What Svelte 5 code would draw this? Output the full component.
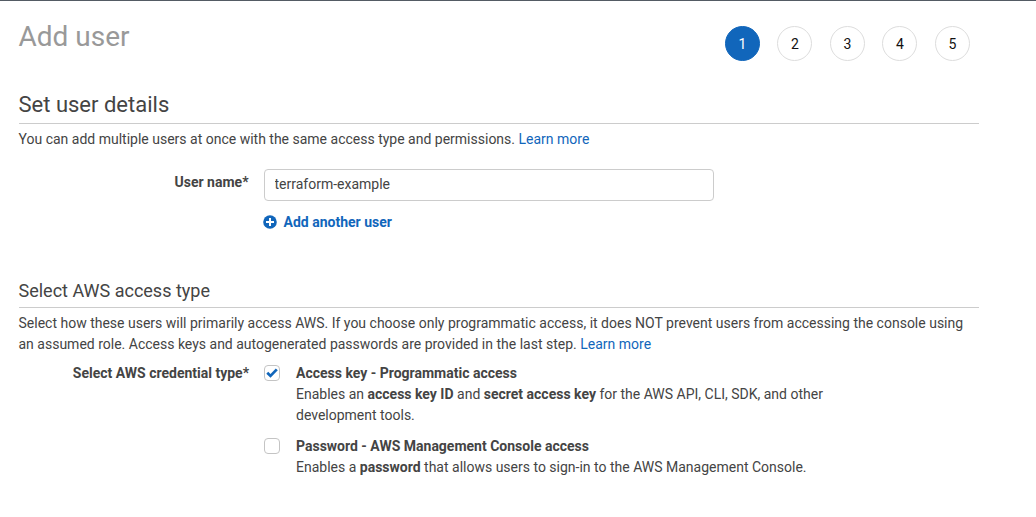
<script>
  const steps = [1, 2, 3, 4, 5];
  let userName = $state('terraform-example');
  let accessKey = $state(true);
  let password = $state(false);
</script>

{#snippet check()}
  <svg width="14" height="14" viewBox="0 0 14 14"><path d="M1.3 7.7L3.2 5.8l2.3 2.2L10.8 2.6l2 1.7-7.3 7.4z" fill="#1166bb" /></svg>
{/snippet}

<main>
  <header>
    <h1>Add user</h1>
    <ol class="steps">
      {#each steps as step}
        <li class:active={step === 1}>{step}</li>
      {/each}
    </ol>
  </header>

  <section class="details">
    <h2>Set user details</h2>
    <p>You can add multiple users at once with the same access type and permissions. <a href="#learn">Learn more</a></p>
    <div class="field">
      <label for="name">User name*</label>
      <input id="name" type="text" bind:value={userName} />
    </div>
    <button class="add" type="button">
      <svg width="14" height="14" viewBox="0 0 14 14"><circle cx="7" cy="7" r="6.8" fill="#1166bb" /><path d="M7 3v8M3 7h8" stroke="#fff" stroke-width="2" /></svg>
      <span>Add another user</span>
    </button>
  </section>

  <section class="access">
    <h3>Select AWS access type</h3>
    <p>Select how these users will primarily access AWS. If you choose only programmatic access, it does NOT prevent users from accessing the console using<br />an assumed role. Access keys and autogenerated passwords are provided in the last step. <a href="#learn">Learn more</a></p>
    <div class="credentials">
      <div class="label">Select AWS credential type*</div>
      <div class="options">
        <label class="option">
          <input type="checkbox" bind:checked={accessKey} />
          <span class="box">{#if accessKey}{@render check()}{/if}</span>
          <span class="text"><b>Access key - Programmatic access</b><br />Enables an <b>access key ID</b> and <b>secret access key</b> for the AWS API, CLI, SDK, and other<br />development tools.</span>
        </label>
        <label class="option">
          <input type="checkbox" bind:checked={password} />
          <span class="box">{#if password}{@render check()}{/if}</span>
          <span class="text"><b>Password - AWS Management Console access</b><br />Enables a <b>password</b> that allows users to sign-in to the AWS Management Console.</span>
        </label>
      </div>
    </div>
  </section>
</main>

<style>
  :global(body) { margin: 0; background: #fff; }
  main { box-sizing: border-box; height: 517px; overflow: hidden; border-top: 1px solid #545b64; padding: 0 57px 0 18.5px; font: 14px/21px Roboto, sans-serif; color: #444; white-space: nowrap; }
  header { display: flex; justify-content: space-between; height: 90px; }
  h1, h2, h3, p { margin: 0; font-weight: 400; }
  h1 { margin-top: 18px; font-size: 28px; line-height: 36px; color: #999; }
  .steps { display: flex; gap: 17.5px; list-style: none; margin: 25px 9.1px 0 0; padding: 0; }
  .steps li { box-sizing: border-box; width: 35px; height: 35px; border: 1px solid #ddd; border-radius: 50%; text-align: center; line-height: 35px; color: #111; }
  .steps .active { background: #1166bb; border-color: #1166bb; color: #fff; }
  h2 { height: 32px; border-bottom: 1px solid #ccc; font-size: 22px; line-height: 27px; }
  .details { height: 189px; }
  .details p { padding-top: 5px; }
  a { color: #1166bb; text-decoration: none; }
  .field { display: flex; margin-top: 19px; }
  .field label, .label { width: 230px; margin-right: 15px; text-align: right; font-weight: 700; }
  .field label { padding-top: 3px; }
  .field input { box-sizing: border-box; width: 450px; height: 32px; border: 1px solid #ccc; border-radius: 4px; padding: 0 10px 2px; font: inherit; color: #444; outline: none; }
  .add { display: flex; align-items: center; gap: 6.5px; margin: 11px 0 0 244.5px; padding: 0; border: 0; background: none; color: #1166bb; font: 700 14px/21px Roboto, sans-serif; }
  .add svg { margin-bottom: 1px; }
  h3 { height: 27px; border-bottom: 1px solid #ccc; font-size: 18px; line-height: 22px; }
  .access p { padding-top: 5px; }
  .credentials { display: flex; margin: 8px 0 0 0.5px; }
  .options { display: flex; flex-direction: column; gap: 10px; }
  .option { display: flex; position: relative; }
  .option input { position: absolute; opacity: 0; margin: 0; }
  .box { box-sizing: border-box; width: 16px; height: 16px; margin: 2px 16px 0 0; border: 1px solid #c4c4c4; border-radius: 4px; }
  .box svg { display: block; }
</style>
